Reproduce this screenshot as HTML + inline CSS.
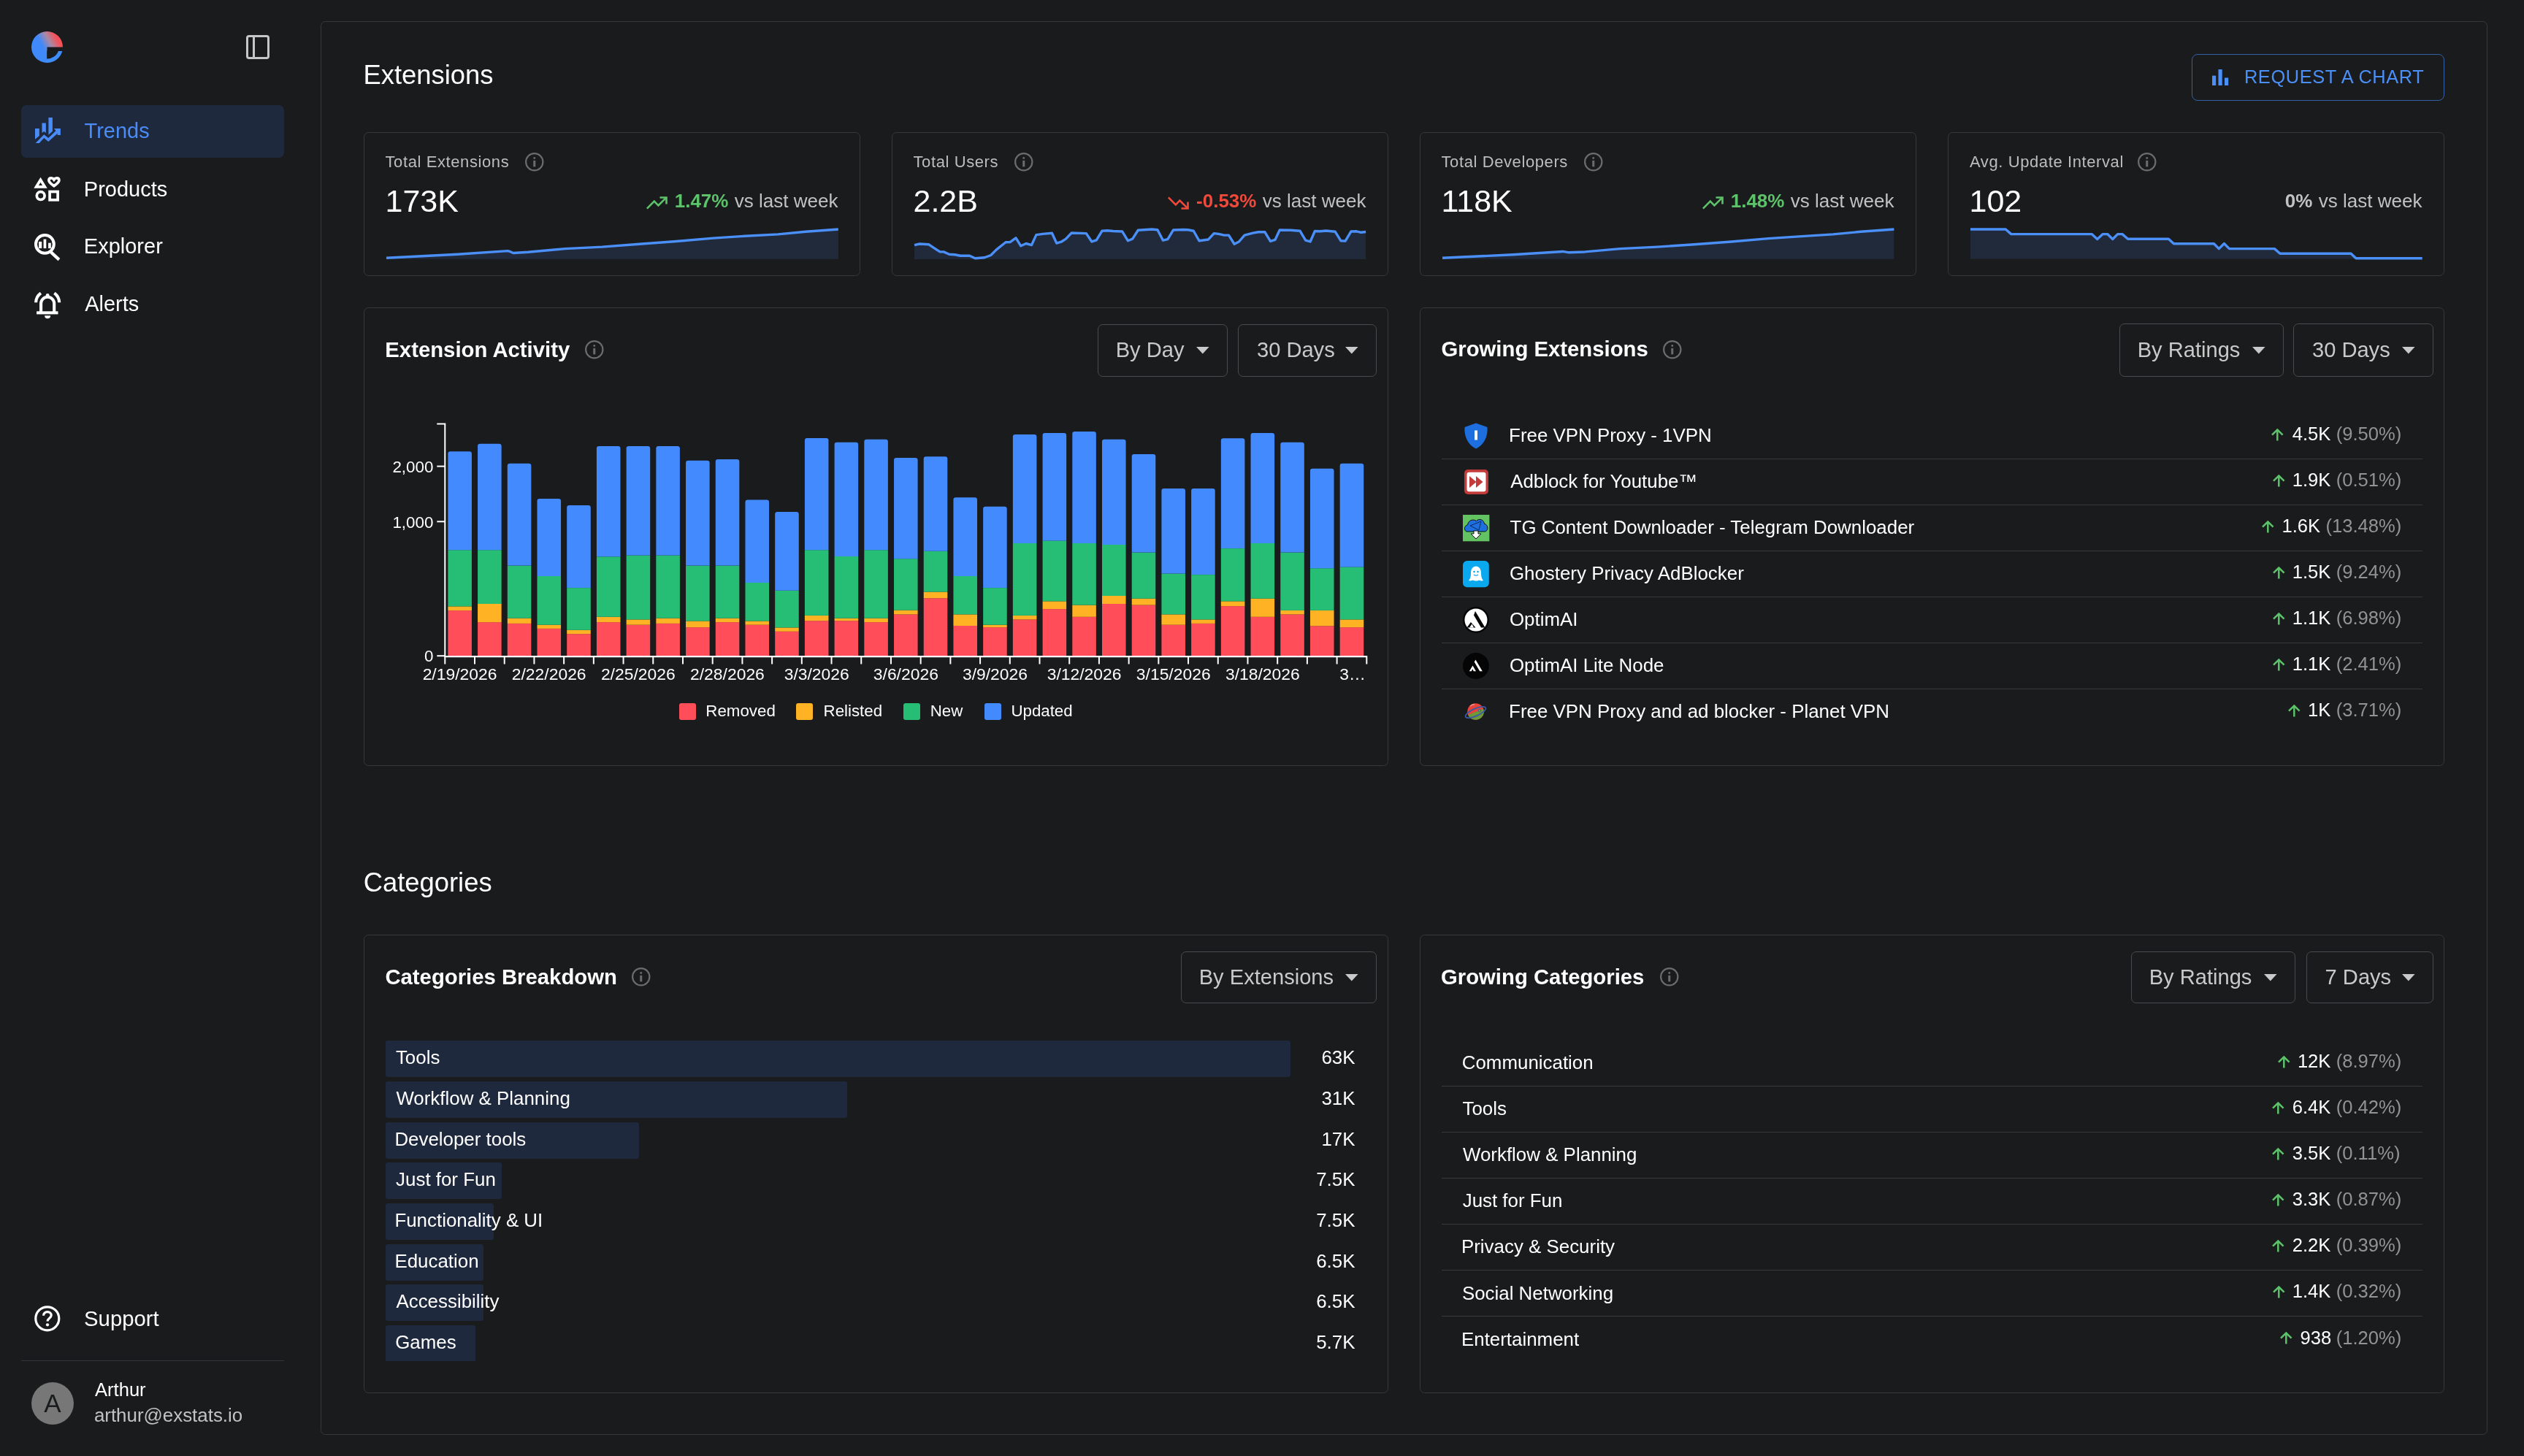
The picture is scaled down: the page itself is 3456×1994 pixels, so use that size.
<!DOCTYPE html><html><head><meta charset="utf-8"><style>
html,body{margin:0;padding:0;background:#1a1b1c;width:3456px;height:1994px;overflow:hidden;}
body{position:relative;font-family:"Liberation Sans",sans-serif;}
#w{position:absolute;left:0;top:0;width:3456px;height:1994px;will-change:transform;}
.t{position:absolute;white-space:nowrap;}
.r{position:absolute;}
.s{position:absolute;overflow:visible;}
</style></head><body><div id="w">
<svg class="s" style="left:43px;top:43px;" width="43" height="43" viewBox="0 0 43 43"><defs><linearGradient id="lg" x1="0.95" y1="0.25" x2="0.3" y2="0.6"><stop offset="0.15" stop-color="#f55158"/><stop offset="0.5" stop-color="#a88aa6"/><stop offset="0.85" stop-color="#4089fb"/></linearGradient></defs>
<path d="M21.5 21.5 H43 A21.5 21.5 0 1 0 21.5 43 Z" fill="url(#lg)"/>
<path d="M20.5 26.9 H42.3 A21.5 21.5 0 0 1 21.5 43 H20.5 Z" fill="#3f8cfb"/>
<path d="M21.2 26.4 H37 A15.7 15.7 0 0 1 21.2 37.4 Z" fill="#1a1b1c"/></svg>
<div class="r" style="left:337.3px;top:48.3px;width:31.4px;height:32.3px;background:transparent;border:3.2px solid #c6c6c6;border-radius:4px;box-sizing:border-box;"></div>
<div class="r" style="left:345.6px;top:48.3px;width:3.2px;height:32.3px;background:#c6c6c6;border-radius:0;"></div>
<div class="r" style="left:29.2px;top:144px;width:359.8px;height:72px;background:#1f293d;border-radius:7px;"></div>
<svg class="s" style="left:48.2px;top:161px;" width="36" height="36" viewBox="0 0 36 36"><g fill="#4a8cf7"><path d="M0 14.9 H5.85 V24.9 L0 29.8 Z"/><path d="M9.48 7.5 H14.85 V21.1 L12.2 19 L9.48 21.1 Z"/><path d="M18.43 0 H23.91 V18.85 L18.43 23.76 Z"/>
<path d="M0.68 34.9 L12.2 23.19 L18.25 27.91 L28.63 18.09 L25.8 15.07 H34.87 V23.95 H30.71 V21.87 L18.25 33.02 L12.2 28.1 L5.78 34.9 Z"/></g></svg>
<div class="t" style="left:115.55px;top:164.75px;font-size:29px;line-height:29px;color:#4a8cf7;font-weight:400;letter-spacing:0px;">Trends</div>
<svg class="s" style="left:47.2px;top:242.3px;" width="36" height="35" viewBox="0 0 36 35"><g fill="none" stroke="#ffffff" stroke-width="3.7"><path d="M8.5 4.2 L14.4 13.9 H2.6 Z" stroke-linejoin="miter"/>
<path d="M26.9 12.6 C24 10.3 19.9 7.8 19.9 4.9 C19.9 2.8 21.4 1.9 23.1 1.9 C24.6 1.9 26 2.8 26.9 4.1 C27.8 2.8 29.2 1.9 30.7 1.9 C32.4 1.9 33.9 2.8 33.9 4.9 C33.9 7.8 29.8 10.3 26.9 12.6 Z"/>
<circle cx="8.7" cy="26.1" r="5.4"/><rect x="21.1" y="20.5" width="11" height="11.3"/></g></svg>
<div class="t" style="left:114.82px;top:244.55px;font-size:29px;line-height:29px;color:#fff;font-weight:400;letter-spacing:0px;">Products</div>
<svg class="s" style="left:46.9px;top:320px;" width="36" height="36" viewBox="0 0 36 36"><circle cx="14.4" cy="14.4" r="12.4" fill="none" stroke="#ffffff" stroke-width="4"/>
<g fill="#ffffff"><rect x="6.1" y="10.9" width="4.1" height="9.2"/><rect x="12.6" y="7.6" width="3.7" height="12.5"/><rect x="19.1" y="12.7" width="3.7" height="7.4"/></g>
<line x1="22.6" y1="25.1" x2="33.9" y2="35.6" stroke="#ffffff" stroke-width="4.2"/></svg>
<div class="t" style="left:114.82px;top:323.15px;font-size:29px;line-height:29px;color:#fff;font-weight:400;letter-spacing:0px;">Explorer</div>
<svg class="s" style="left:46.9px;top:399.7px;" width="36" height="37" viewBox="0 0 36 37"><g fill="none" stroke="#ffffff" stroke-width="4.1"><path d="M9.1 27 V15.8 A9.05 9.05 0 0 1 27.2 15.8 V27"/>
<path d="M8.9 1.3 A16.8 16.8 0 0 0 2.1 14.2"/><path d="M27.4 1.3 A16.8 16.8 0 0 1 34.2 14.2"/></g>
<rect x="3.1" y="26.3" width="29.4" height="4.1" fill="#ffffff"/><circle cx="18.15" cy="4.3" r="2.4" fill="#ffffff"/><path d="M14.1 32.3 H22.2 A4.05 4.05 0 0 1 14.1 32.3 Z" fill="#ffffff"/></svg>
<div class="t" style="left:116.14px;top:402.35px;font-size:29px;line-height:29px;color:#fff;font-weight:400;letter-spacing:0px;">Alerts</div>
<svg class="s" style="left:46.8px;top:1787.5px;" width="36" height="36" viewBox="0 0 36 36"><circle cx="17.8" cy="17.8" r="16" fill="none" stroke="#ffffff" stroke-width="3.2"/>
<path d="M12.6 13.7 C12.6 10.6 15 8.6 17.9 8.6 C20.9 8.6 23.2 10.6 23.2 13.3 C23.2 17.3 18.1 17.3 18.1 21.6" fill="none" stroke="#ffffff" stroke-width="3.2"/>
<circle cx="18" cy="26.3" r="2.1" fill="#ffffff"/></svg>
<div class="t" style="left:115.07px;top:1790.99px;font-size:29.3px;line-height:29.3px;color:#fff;font-weight:400;letter-spacing:0px;">Support</div>
<div class="r" style="left:29px;top:1862.8px;width:360px;height:1.5px;background:#333437;border-radius:0;"></div>
<div class="r" style="left:43px;top:1893px;width:58px;height:58px;border-radius:50%;background:#777778"></div>
<div class="t" style="left:60.33px;top:1904.47px;font-size:35px;line-height:35px;color:#1a1b1c;font-weight:400;letter-spacing:0px;">A</div>
<div class="t" style="left:129.95px;top:1890.62px;font-size:25.6px;line-height:25.6px;color:#fff;font-weight:400;letter-spacing:0px;">Arthur</div>
<div class="t" style="left:128.9px;top:1925.97px;font-size:25.9px;line-height:25.9px;color:#c2c2c2;font-weight:400;letter-spacing:0px;">arthur@exstats.io</div>
<div class="r" style="left:439px;top:29px;width:2967px;height:1936px;background:transparent;border:1px solid #37383a;border-radius:6.5px;box-sizing:border-box;"></div>
<div class="t" style="left:497.51px;top:85.38px;font-size:36.4px;line-height:36.4px;color:#fff;font-weight:400;letter-spacing:0px;">Extensions</div>
<div class="r" style="left:3001.3px;top:74.4px;width:345.4px;height:63.3px;background:transparent;border:1.5px solid #3560a8;border-radius:8px;box-sizing:border-box;"></div>
<svg class="s" style="left:3028.8px;top:95px;" width="22.4" height="22" viewBox="0 0 22.4 22"><g fill="#4b8ff9"><rect x="0" y="8.6" width="5.2" height="13.4"/><rect x="8.5" y="0" width="5.2" height="22"/><rect x="17" y="11.5" width="5.2" height="10.5"/></g></svg>
<div class="t" style="left:3072.92px;top:92.99px;font-size:25.4px;line-height:25.4px;color:#4b8ff9;font-weight:400;letter-spacing:0.6px;">REQUEST A CHART</div>
<div class="r" style="left:498px;top:181px;width:680px;height:197px;background:transparent;border:1px solid #37383a;border-radius:6.5px;box-sizing:border-box;"></div>
<div class="t" style="left:527.51px;top:211.07px;font-size:22px;line-height:22px;color:#bdbdbd;font-weight:400;letter-spacing:0.6px;">Total Extensions</div>
<svg class="s" style="left:719.1px;top:209.05px;" width="25.5" height="25.5" viewBox="0 0 25.5 25.5"><circle cx="12.75" cy="12.75" r="11.65" fill="none" stroke="#6b6c6e" stroke-width="2.2"/><rect x="11.25" y="10.85" width="3" height="8.5" fill="#6b6c6e"/><circle cx="12.75" cy="7.45" r="1.45" fill="#6b6c6e"/></svg>
<div class="t" style="left:527.5px;top:253.79px;font-size:43px;line-height:43px;color:#fff;font-weight:400;letter-spacing:0px;">173K</div>
<div class="t" style="left:1005.86px;top:261.59px;font-size:26px;line-height:26px;color:#c2c2c2;font-weight:400;letter-spacing:0px;">vs last week</div>
<div class="t" style="left:923.71px;top:261.59px;font-size:26px;line-height:26px;color:#5dc36b;font-weight:700;letter-spacing:0px;">1.47%</div>
<svg class="s" style="left:885.15px;top:268.5px;" width="29" height="18" viewBox="0 0 29 18"><g fill="none" stroke="#5dc36b" stroke-width="2.6"><polyline points="0.9,16.6 10.8,6.7 16.4,12.3 27,1.8"/><polyline points="18.5,1.5 27.5,1.5 27.5,10.5"/></g></svg>
<div class="r" style="left:1221px;top:181px;width:680px;height:197px;background:transparent;border:1px solid #37383a;border-radius:6.5px;box-sizing:border-box;"></div>
<div class="t" style="left:1250.51px;top:211.07px;font-size:22px;line-height:22px;color:#bdbdbd;font-weight:400;letter-spacing:0.6px;">Total Users</div>
<svg class="s" style="left:1388.93px;top:209.05px;" width="25.5" height="25.5" viewBox="0 0 25.5 25.5"><circle cx="12.75" cy="12.75" r="11.65" fill="none" stroke="#6b6c6e" stroke-width="2.2"/><rect x="11.25" y="10.85" width="3" height="8.5" fill="#6b6c6e"/><circle cx="12.75" cy="7.45" r="1.45" fill="#6b6c6e"/></svg>
<div class="t" style="left:1250.5px;top:253.79px;font-size:43px;line-height:43px;color:#fff;font-weight:400;letter-spacing:0px;">2.2B</div>
<div class="t" style="left:1728.86px;top:261.59px;font-size:26px;line-height:26px;color:#c2c2c2;font-weight:400;letter-spacing:0px;">vs last week</div>
<div class="t" style="left:1638.05px;top:261.59px;font-size:26px;line-height:26px;color:#ef4a3c;font-weight:700;letter-spacing:0px;">-0.53%</div>
<svg class="s" style="left:1598.87px;top:269px;" width="29" height="18" viewBox="0 0 29 18"><g transform="translate(0,18) scale(1,-1)" fill="none" stroke="#ef4a3c" stroke-width="2.6"><polyline points="0.9,16.6 10.8,6.7 16.4,12.3 27,1.8"/><polyline points="18.5,1.5 27.5,1.5 27.5,10.5"/></g></svg>
<div class="r" style="left:1944px;top:181px;width:680px;height:197px;background:transparent;border:1px solid #37383a;border-radius:6.5px;box-sizing:border-box;"></div>
<div class="t" style="left:1973.51px;top:211.07px;font-size:22px;line-height:22px;color:#bdbdbd;font-weight:400;letter-spacing:0.6px;">Total Developers</div>
<svg class="s" style="left:2168.76px;top:209.05px;" width="25.5" height="25.5" viewBox="0 0 25.5 25.5"><circle cx="12.75" cy="12.75" r="11.65" fill="none" stroke="#6b6c6e" stroke-width="2.2"/><rect x="11.25" y="10.85" width="3" height="8.5" fill="#6b6c6e"/><circle cx="12.75" cy="7.45" r="1.45" fill="#6b6c6e"/></svg>
<div class="t" style="left:1973.5px;top:253.79px;font-size:43px;line-height:43px;color:#fff;font-weight:400;letter-spacing:0px;">118K</div>
<div class="t" style="left:2451.86px;top:261.59px;font-size:26px;line-height:26px;color:#c2c2c2;font-weight:400;letter-spacing:0px;">vs last week</div>
<div class="t" style="left:2369.71px;top:261.59px;font-size:26px;line-height:26px;color:#5dc36b;font-weight:700;letter-spacing:0px;">1.48%</div>
<svg class="s" style="left:2331.15px;top:268.5px;" width="29" height="18" viewBox="0 0 29 18"><g fill="none" stroke="#5dc36b" stroke-width="2.6"><polyline points="0.9,16.6 10.8,6.7 16.4,12.3 27,1.8"/><polyline points="18.5,1.5 27.5,1.5 27.5,10.5"/></g></svg>
<div class="r" style="left:2667px;top:181px;width:680px;height:197px;background:transparent;border:1px solid #37383a;border-radius:6.5px;box-sizing:border-box;"></div>
<div class="t" style="left:2696.96px;top:211.07px;font-size:22px;line-height:22px;color:#bdbdbd;font-weight:400;letter-spacing:0.6px;">Avg. Update Interval</div>
<svg class="s" style="left:2926.97px;top:209.05px;" width="25.5" height="25.5" viewBox="0 0 25.5 25.5"><circle cx="12.75" cy="12.75" r="11.65" fill="none" stroke="#6b6c6e" stroke-width="2.2"/><rect x="11.25" y="10.85" width="3" height="8.5" fill="#6b6c6e"/><circle cx="12.75" cy="7.45" r="1.45" fill="#6b6c6e"/></svg>
<div class="t" style="left:2696.5px;top:253.79px;font-size:43px;line-height:43px;color:#fff;font-weight:400;letter-spacing:0px;">102</div>
<div class="t" style="left:3174.86px;top:261.59px;font-size:26px;line-height:26px;color:#c2c2c2;font-weight:400;letter-spacing:0px;">vs last week</div>
<div class="t" style="left:3128.85px;top:261.59px;font-size:26px;line-height:26px;color:#c2c2c2;font-weight:700;letter-spacing:0px;">0%</div>
<svg class="s" style="left:526.8px;top:310.95px;" width="622.8" height="44.75" viewBox="0 0 622.8 44.75"><path d="M2,43.75 L2,42.3 L99.69,37.23 L168.15,32.67 L171.95,33.68 L175.76,35.45 L196.04,34.19 L246.75,29.62 L297.46,27.09 L348.17,23.28 L398.88,19.48 L449.59,15.17 L487.62,12.63 L538.33,9.85 L576.36,6.3 L620.8,3 L620.8,43.75 Z" fill="#212a3b"/><polyline points="2,42.3 99.69,37.23 168.15,32.67 171.95,33.68 175.76,35.45 196.04,34.19 246.75,29.62 297.46,27.09 348.17,23.28 398.88,19.48 449.59,15.17 487.62,12.63 538.33,9.85 576.36,6.3 620.8,3" fill="none" stroke="#4b8ff9" stroke-width="3.4" stroke-linejoin="round"/></svg>
<svg class="s" style="left:1249.9px;top:310.58px;" width="622.2" height="45.12" viewBox="0 0 622.2 45.12"><path d="M2,44.12 L2,24.55 L9.12,23.03 L21.79,23.79 L28.13,28.1 L37.01,33.93 L42.08,33.93 L49.68,37.23 L57.29,37.74 L64.9,39.26 L77.57,39.26 L85.18,42.81 L97.86,41.79 L106.73,38.5 L114.34,30.89 L127.02,20.75 L133.36,20.49 L140.96,14.92 L147.81,25.82 L154.91,22.52 L162.51,24.55 L168.85,10.61 L177.73,9.34 L190.4,8.32 L196.74,22.02 L203.08,20.24 L209.42,16.18 L217.03,8.07 L237.31,8.58 L244.92,19.99 L251.26,17.96 L258.86,5.28 L266.47,4.77 L274.08,5.54 L286.75,6.04 L294.36,18.72 L300.7,16.18 L308.3,4.27 L319.71,3.51 L327.32,3 L334.93,3.76 L342.53,18.21 L348.87,16.69 L356.48,4.01 L370.42,3.51 L376.76,3.76 L384.37,5.28 L391.98,18.72 L404.65,16.95 L412.26,8.58 L418.6,9.34 L426.21,11.11 L432.54,11.11 L440.15,23.28 L446.49,19.99 L454.1,11.11 L465.51,8.07 L473.11,6.8 L481.99,6.8 L489.59,19.48 L495.93,17.45 L502.27,4.01 L517.48,4.27 L530.16,5.28 L537.77,18.21 L544.11,19.99 L550.44,5.54 L558.05,5.79 L565.66,5.03 L578.34,6.3 L585.94,18.72 L592.28,18.97 L599.89,6.04 L607.49,5.79 L613.83,7.31 L620.2,6.55 L620.2,44.12 Z" fill="#212a3b"/><polyline points="2,24.55 9.12,23.03 21.79,23.79 28.13,28.1 37.01,33.93 42.08,33.93 49.68,37.23 57.29,37.74 64.9,39.26 77.57,39.26 85.18,42.81 97.86,41.79 106.73,38.5 114.34,30.89 127.02,20.75 133.36,20.49 140.96,14.92 147.81,25.82 154.91,22.52 162.51,24.55 168.85,10.61 177.73,9.34 190.4,8.32 196.74,22.02 203.08,20.24 209.42,16.18 217.03,8.07 237.31,8.58 244.92,19.99 251.26,17.96 258.86,5.28 266.47,4.77 274.08,5.54 286.75,6.04 294.36,18.72 300.7,16.18 308.3,4.27 319.71,3.51 327.32,3 334.93,3.76 342.53,18.21 348.87,16.69 356.48,4.01 370.42,3.51 376.76,3.76 384.37,5.28 391.98,18.72 404.65,16.95 412.26,8.58 418.6,9.34 426.21,11.11 432.54,11.11 440.15,23.28 446.49,19.99 454.1,11.11 465.51,8.07 473.11,6.8 481.99,6.8 489.59,19.48 495.93,17.45 502.27,4.01 517.48,4.27 530.16,5.28 537.77,18.21 544.11,19.99 550.44,5.54 558.05,5.79 565.66,5.03 578.34,6.3 585.94,18.72 592.28,18.97 599.89,6.04 607.49,5.79 613.83,7.31 620.2,6.55" fill="none" stroke="#4b8ff9" stroke-width="3.4" stroke-linejoin="round"/></svg>
<svg class="s" style="left:1973.2px;top:310.95px;" width="622.4" height="44.75" viewBox="0 0 622.4 44.75"><path d="M2,43.75 L2,42.3 L98.29,37.74 L166.75,33.43 L174.36,34.69 L197.18,33.93 L245.35,29.62 L296.06,27.09 L346.77,23.79 L397.48,19.99 L448.19,15.68 L486.22,13.14 L536.93,9.85 L574.96,6.3 L620.4,3 L620.4,43.75 Z" fill="#212a3b"/><polyline points="2,42.3 98.29,37.74 166.75,33.43 174.36,34.69 197.18,33.93 245.35,29.62 296.06,27.09 346.77,23.79 397.48,19.99 448.19,15.68 486.22,13.14 536.93,9.85 574.96,6.3 620.4,3" fill="none" stroke="#4b8ff9" stroke-width="3.4" stroke-linejoin="round"/></svg>
<svg class="s" style="left:2695.7px;top:311.09px;" width="622.7" height="44.61" viewBox="0 0 622.7 44.61"><path d="M2,43.61 L2,3 L50.22,3 L57.83,9.59 L168.12,9.59 L175.73,16.44 L183.34,9.59 L189.68,9.59 L196.77,16.44 L203.62,9.59 L209.96,9.59 L217.57,16.18 L273.35,16.18 L280.45,22.78 L335.47,22.78 L342.31,29.62 L349.41,22.52 L356.51,29.62 L418.38,29.62 L425.98,36.22 L523.09,36.22 L529.94,42.81 L620.7,42.81 L620.7,43.61 Z" fill="#212a3b"/><polyline points="2,3 50.22,3 57.83,9.59 168.12,9.59 175.73,16.44 183.34,9.59 189.68,9.59 196.77,16.44 203.62,9.59 209.96,9.59 217.57,16.18 273.35,16.18 280.45,22.78 335.47,22.78 342.31,29.62 349.41,22.52 356.51,29.62 418.38,29.62 425.98,36.22 523.09,36.22 529.94,42.81 620.7,42.81" fill="none" stroke="#4b8ff9" stroke-width="3.4" stroke-linejoin="round"/></svg>
<div class="r" style="left:498px;top:421px;width:1403px;height:628px;background:transparent;border:1px solid #37383a;border-radius:6.5px;box-sizing:border-box;"></div>
<div class="t" style="left:527.34px;top:463.69px;font-size:29.3px;line-height:29.3px;color:#fff;font-weight:700;letter-spacing:0px;">Extension Activity</div>
<svg class="s" style="left:801.25px;top:466.25px;" width="25.5" height="25.5" viewBox="0 0 25.5 25.5"><circle cx="12.75" cy="12.75" r="11.65" fill="none" stroke="#6b6c6e" stroke-width="2.2"/><rect x="11.25" y="10.85" width="3" height="8.5" fill="#6b6c6e"/><circle cx="12.75" cy="7.45" r="1.45" fill="#6b6c6e"/></svg>
<div class="r" style="left:1503px;top:444px;width:178px;height:72px;background:transparent;border:1.5px solid #4a4b4e;border-radius:7px;box-sizing:border-box;"></div>
<div class="t" style="left:1527.71px;top:465.16px;font-size:29.1px;line-height:29.1px;color:#c9c9c9;font-weight:400;letter-spacing:0px;">By Day</div>
<svg class="s" style="left:1638.4px;top:475.2px;" width="17.6" height="9.6" viewBox="0 0 17.6 9.6"><path d="M0 0H17.6L8.8 9.6Z" fill="#c9c9c9"/></svg>
<div class="r" style="left:1695px;top:444px;width:190px;height:72px;background:transparent;border:1.5px solid #4a4b4e;border-radius:7px;box-sizing:border-box;"></div>
<div class="t" style="left:1720.99px;top:465.16px;font-size:29.1px;line-height:29.1px;color:#c9c9c9;font-weight:400;letter-spacing:0px;">30 Days</div>
<svg class="s" style="left:1842.4px;top:475.2px;" width="17.6" height="9.6" viewBox="0 0 17.6 9.6"><path d="M0 0H17.6L8.8 9.6Z" fill="#c9c9c9"/></svg>
<svg class="s" style="left:0px;top:0px;" width="1960" height="1000" viewBox="0 0 1960 1000"><rect x="613.37" y="836.1" width="32.57" height="62.1" fill="#ff4d5a"/><rect x="613.37" y="830.4" width="32.57" height="5.7" fill="#ffb224"/><rect x="613.37" y="753.2" width="32.57" height="77.2" fill="#25be74"/><path d="M613.37,753.2 V621.5 Q613.37,618.3 616.57,618.3 H642.74 Q645.94,618.3 645.94,621.5 V753.2 Z" fill="#438aff"/><rect x="654.08" y="852.1" width="32.57" height="46.1" fill="#ff4d5a"/><rect x="654.08" y="827" width="32.57" height="25.1" fill="#ffb224"/><rect x="654.08" y="753.2" width="32.57" height="73.8" fill="#25be74"/><path d="M654.08,753.2 V611 Q654.08,607.8 657.28,607.8 H683.45 Q686.65,607.8 686.65,611 V753.2 Z" fill="#438aff"/><rect x="694.79" y="853.9" width="32.57" height="44.3" fill="#ff4d5a"/><rect x="694.79" y="846.6" width="32.57" height="7.3" fill="#ffb224"/><rect x="694.79" y="774.6" width="32.57" height="72" fill="#25be74"/><path d="M694.79,774.6 V637.9 Q694.79,634.7 697.99,634.7 H724.16 Q727.36,634.7 727.36,637.9 V774.6 Z" fill="#438aff"/><rect x="735.5" y="860.9" width="32.57" height="37.3" fill="#ff4d5a"/><rect x="735.5" y="855.7" width="32.57" height="5.2" fill="#ffb224"/><rect x="735.5" y="788.9" width="32.57" height="66.8" fill="#25be74"/><path d="M735.5,788.9 V686.2 Q735.5,683 738.7,683 H764.87 Q768.07,683 768.07,686.2 V788.9 Z" fill="#438aff"/><rect x="776.21" y="868.2" width="32.57" height="30" fill="#ff4d5a"/><rect x="776.21" y="862.8" width="32.57" height="5.4" fill="#ffb224"/><rect x="776.21" y="805.1" width="32.57" height="57.7" fill="#25be74"/><path d="M776.21,805.1 V695.1 Q776.21,691.9 779.41,691.9 H805.58 Q808.78,691.9 808.78,695.1 V805.1 Z" fill="#438aff"/><rect x="816.92" y="852.1" width="32.57" height="46.1" fill="#ff4d5a"/><rect x="816.92" y="844.8" width="32.57" height="7.3" fill="#ffb224"/><rect x="816.92" y="762.3" width="32.57" height="82.5" fill="#25be74"/><path d="M816.92,762.3 V614.2 Q816.92,611 820.12,611 H846.29 Q849.49,611 849.49,614.2 V762.3 Z" fill="#438aff"/><rect x="857.63" y="855.7" width="32.57" height="42.5" fill="#ff4d5a"/><rect x="857.63" y="848.4" width="32.57" height="7.3" fill="#ffb224"/><rect x="857.63" y="760.5" width="32.57" height="87.9" fill="#25be74"/><path d="M857.63,760.5 V614.2 Q857.63,611 860.83,611 H887 Q890.2,611 890.2,614.2 V760.5 Z" fill="#438aff"/><rect x="898.34" y="853.9" width="32.57" height="44.3" fill="#ff4d5a"/><rect x="898.34" y="846.6" width="32.57" height="7.3" fill="#ffb224"/><rect x="898.34" y="760.5" width="32.57" height="86.1" fill="#25be74"/><path d="M898.34,760.5 V614.2 Q898.34,611 901.54,611 H927.71 Q930.91,611 930.91,614.2 V760.5 Z" fill="#438aff"/><rect x="939.05" y="859.1" width="32.57" height="39.1" fill="#ff4d5a"/><rect x="939.05" y="850.5" width="32.57" height="8.6" fill="#ffb224"/><rect x="939.05" y="774.6" width="32.57" height="75.9" fill="#25be74"/><path d="M939.05,774.6 V634 Q939.05,630.8 942.25,630.8 H968.42 Q971.62,630.8 971.62,634 V774.6 Z" fill="#438aff"/><rect x="979.76" y="852.1" width="32.57" height="46.1" fill="#ff4d5a"/><rect x="979.76" y="846.6" width="32.57" height="5.5" fill="#ffb224"/><rect x="979.76" y="774.6" width="32.57" height="72" fill="#25be74"/><path d="M979.76,774.6 V632.2 Q979.76,629 982.96,629 H1009.13 Q1012.33,629 1012.33,632.2 V774.6 Z" fill="#438aff"/><rect x="1020.47" y="855.7" width="32.57" height="42.5" fill="#ff4d5a"/><rect x="1020.47" y="850.5" width="32.57" height="5.2" fill="#ffb224"/><rect x="1020.47" y="798" width="32.57" height="52.5" fill="#25be74"/><path d="M1020.47,798 V687.7 Q1020.47,684.5 1023.67,684.5 H1049.84 Q1053.04,684.5 1053.04,687.7 V798 Z" fill="#438aff"/><rect x="1061.18" y="864.8" width="32.57" height="33.4" fill="#ff4d5a"/><rect x="1061.18" y="859.4" width="32.57" height="5.4" fill="#ffb224"/><rect x="1061.18" y="808.7" width="32.57" height="50.7" fill="#25be74"/><path d="M1061.18,808.7 V704.2 Q1061.18,701 1064.38,701 H1090.55 Q1093.75,701 1093.75,704.2 V808.7 Z" fill="#438aff"/><rect x="1101.89" y="850.2" width="32.57" height="48" fill="#ff4d5a"/><rect x="1101.89" y="842.9" width="32.57" height="7.3" fill="#ffb224"/><rect x="1101.89" y="753.2" width="32.57" height="89.7" fill="#25be74"/><path d="M1101.89,753.2 V603.2 Q1101.89,600 1105.09,600 H1131.26 Q1134.46,600 1134.46,603.2 V753.2 Z" fill="#438aff"/><rect x="1142.6" y="850.2" width="32.57" height="48" fill="#ff4d5a"/><rect x="1142.6" y="846.6" width="32.57" height="3.6" fill="#ffb224"/><rect x="1142.6" y="762" width="32.57" height="84.6" fill="#25be74"/><path d="M1142.6,762 V608.9 Q1142.6,605.7 1145.8,605.7 H1171.97 Q1175.17,605.7 1175.17,608.9 V762 Z" fill="#438aff"/><rect x="1183.31" y="852.1" width="32.57" height="46.1" fill="#ff4d5a"/><rect x="1183.31" y="846.6" width="32.57" height="5.5" fill="#ffb224"/><rect x="1183.31" y="753.2" width="32.57" height="93.4" fill="#25be74"/><path d="M1183.31,753.2 V605 Q1183.31,601.8 1186.51,601.8 H1212.68 Q1215.88,601.8 1215.88,605 V753.2 Z" fill="#438aff"/><rect x="1224.02" y="841.4" width="32.57" height="56.8" fill="#ff4d5a"/><rect x="1224.02" y="835.6" width="32.57" height="5.8" fill="#ffb224"/><rect x="1224.02" y="765.2" width="32.57" height="70.4" fill="#25be74"/><path d="M1224.02,765.2 V630.3 Q1224.02,627.1 1227.22,627.1 H1253.39 Q1256.59,627.1 1256.59,630.3 V765.2 Z" fill="#438aff"/><rect x="1264.73" y="819.2" width="32.57" height="79" fill="#ff4d5a"/><rect x="1264.73" y="810.6" width="32.57" height="8.6" fill="#ffb224"/><rect x="1264.73" y="754.7" width="32.57" height="55.9" fill="#25be74"/><path d="M1264.73,754.7 V628.5 Q1264.73,625.3 1267.93,625.3 H1294.1 Q1297.3,625.3 1297.3,628.5 V754.7 Z" fill="#438aff"/><rect x="1305.44" y="857" width="32.57" height="41.2" fill="#ff4d5a"/><rect x="1305.44" y="841.4" width="32.57" height="15.6" fill="#ffb224"/><rect x="1305.44" y="788.9" width="32.57" height="52.5" fill="#25be74"/><path d="M1305.44,788.9 V684.4 Q1305.44,681.2 1308.64,681.2 H1334.81 Q1338.01,681.2 1338.01,684.4 V788.9 Z" fill="#438aff"/><rect x="1346.15" y="859.1" width="32.57" height="39.1" fill="#ff4d5a"/><rect x="1346.15" y="855.7" width="32.57" height="3.4" fill="#ffb224"/><rect x="1346.15" y="805.1" width="32.57" height="50.6" fill="#25be74"/><path d="M1346.15,805.1 V696.9 Q1346.15,693.7 1349.35,693.7 H1375.52 Q1378.72,693.7 1378.72,696.9 V805.1 Z" fill="#438aff"/><rect x="1386.86" y="848.4" width="32.57" height="49.8" fill="#ff4d5a"/><rect x="1386.86" y="842.9" width="32.57" height="5.5" fill="#ffb224"/><rect x="1386.86" y="744" width="32.57" height="98.9" fill="#25be74"/><path d="M1386.86,744 V598.2 Q1386.86,595 1390.06,595 H1416.23 Q1419.43,595 1419.43,598.2 V744 Z" fill="#438aff"/><rect x="1427.57" y="834.1" width="32.57" height="64.1" fill="#ff4d5a"/><rect x="1427.57" y="823.4" width="32.57" height="10.7" fill="#ffb224"/><rect x="1427.57" y="740.4" width="32.57" height="83" fill="#25be74"/><path d="M1427.57,740.4 V596.2 Q1427.57,593 1430.77,593 H1456.94 Q1460.14,593 1460.14,596.2 V740.4 Z" fill="#438aff"/><rect x="1468.28" y="844.8" width="32.57" height="53.4" fill="#ff4d5a"/><rect x="1468.28" y="828.6" width="32.57" height="16.2" fill="#ffb224"/><rect x="1468.28" y="744" width="32.57" height="84.6" fill="#25be74"/><path d="M1468.28,744 V594.3 Q1468.28,591.1 1471.48,591.1 H1497.65 Q1500.85,591.1 1500.85,594.3 V744 Z" fill="#438aff"/><rect x="1508.99" y="827" width="32.57" height="71.2" fill="#ff4d5a"/><rect x="1508.99" y="816" width="32.57" height="11" fill="#ffb224"/><rect x="1508.99" y="745.9" width="32.57" height="70.1" fill="#25be74"/><path d="M1508.99,745.9 V605 Q1508.99,601.8 1512.19,601.8 H1538.36 Q1541.56,601.8 1541.56,605 V745.9 Z" fill="#438aff"/><rect x="1549.7" y="828.6" width="32.57" height="69.6" fill="#ff4d5a"/><rect x="1549.7" y="819.7" width="32.57" height="8.9" fill="#ffb224"/><rect x="1549.7" y="756.6" width="32.57" height="63.1" fill="#25be74"/><path d="M1549.7,756.6 V625.1 Q1549.7,621.9 1552.9,621.9 H1579.07 Q1582.27,621.9 1582.27,625.1 V756.6 Z" fill="#438aff"/><rect x="1590.41" y="855.7" width="32.57" height="42.5" fill="#ff4d5a"/><rect x="1590.41" y="841.4" width="32.57" height="14.3" fill="#ffb224"/><rect x="1590.41" y="785.5" width="32.57" height="55.9" fill="#25be74"/><path d="M1590.41,785.5 V672.1 Q1590.41,668.9 1593.61,668.9 H1619.78 Q1622.98,668.9 1622.98,672.1 V785.5 Z" fill="#438aff"/><rect x="1631.12" y="853.9" width="32.57" height="44.3" fill="#ff4d5a"/><rect x="1631.12" y="848.4" width="32.57" height="5.5" fill="#ffb224"/><rect x="1631.12" y="787.1" width="32.57" height="61.3" fill="#25be74"/><path d="M1631.12,787.1 V672.1 Q1631.12,668.9 1634.32,668.9 H1660.49 Q1663.69,668.9 1663.69,672.1 V787.1 Z" fill="#438aff"/><rect x="1671.83" y="830.1" width="32.57" height="68.1" fill="#ff4d5a"/><rect x="1671.83" y="823.4" width="32.57" height="6.7" fill="#ffb224"/><rect x="1671.83" y="751.1" width="32.57" height="72.3" fill="#25be74"/><path d="M1671.83,751.1 V603.5 Q1671.83,600.3 1675.03,600.3 H1701.2 Q1704.4,600.3 1704.4,603.5 V751.1 Z" fill="#438aff"/><rect x="1712.54" y="844.8" width="32.57" height="53.4" fill="#ff4d5a"/><rect x="1712.54" y="819.7" width="32.57" height="25.1" fill="#ffb224"/><rect x="1712.54" y="744" width="32.57" height="75.7" fill="#25be74"/><path d="M1712.54,744 V596.2 Q1712.54,593 1715.74,593 H1741.91 Q1745.11,593 1745.11,596.2 V744 Z" fill="#438aff"/><rect x="1753.25" y="841.4" width="32.57" height="56.8" fill="#ff4d5a"/><rect x="1753.25" y="835.9" width="32.57" height="5.5" fill="#ffb224"/><rect x="1753.25" y="756.6" width="32.57" height="79.3" fill="#25be74"/><path d="M1753.25,756.6 V608.9 Q1753.25,605.7 1756.45,605.7 H1782.62 Q1785.82,605.7 1785.82,608.9 V756.6 Z" fill="#438aff"/><rect x="1793.96" y="857.3" width="32.57" height="40.9" fill="#ff4d5a"/><rect x="1793.96" y="835.9" width="32.57" height="21.4" fill="#ffb224"/><rect x="1793.96" y="778.2" width="32.57" height="57.7" fill="#25be74"/><path d="M1793.96,778.2 V645 Q1793.96,641.8 1797.16,641.8 H1823.33 Q1826.53,641.8 1826.53,645 V778.2 Z" fill="#438aff"/><rect x="1834.67" y="859.1" width="32.57" height="39.1" fill="#ff4d5a"/><rect x="1834.67" y="848.4" width="32.57" height="10.7" fill="#ffb224"/><rect x="1834.67" y="776.4" width="32.57" height="72" fill="#25be74"/><path d="M1834.67,776.4 V637.9 Q1834.67,634.7 1837.87,634.7 H1864.04 Q1867.24,634.7 1867.24,637.9 V776.4 Z" fill="#438aff"/><path d="M598.3,580.5 H609.3 V898.2" fill="none" stroke="#ffffff" stroke-width="2"/><line x1="608.3" y1="899.1" x2="1871.5" y2="899.1" stroke="#ffffff" stroke-width="2.2"/><line x1="598.3" y1="898.2" x2="609.3" y2="898.2" stroke="#ffffff" stroke-width="2"/><line x1="598.3" y1="714.3" x2="609.3" y2="714.3" stroke="#ffffff" stroke-width="2"/><line x1="598.3" y1="638.6" x2="609.3" y2="638.6" stroke="#ffffff" stroke-width="2"/><line x1="609.3" y1="898.2" x2="609.3" y2="909.5" stroke="#ffffff" stroke-width="2"/><line x1="650.01" y1="898.2" x2="650.01" y2="909.5" stroke="#ffffff" stroke-width="2"/><line x1="690.72" y1="898.2" x2="690.72" y2="909.5" stroke="#ffffff" stroke-width="2"/><line x1="731.43" y1="898.2" x2="731.43" y2="909.5" stroke="#ffffff" stroke-width="2"/><line x1="772.14" y1="898.2" x2="772.14" y2="909.5" stroke="#ffffff" stroke-width="2"/><line x1="812.85" y1="898.2" x2="812.85" y2="909.5" stroke="#ffffff" stroke-width="2"/><line x1="853.56" y1="898.2" x2="853.56" y2="909.5" stroke="#ffffff" stroke-width="2"/><line x1="894.27" y1="898.2" x2="894.27" y2="909.5" stroke="#ffffff" stroke-width="2"/><line x1="934.98" y1="898.2" x2="934.98" y2="909.5" stroke="#ffffff" stroke-width="2"/><line x1="975.69" y1="898.2" x2="975.69" y2="909.5" stroke="#ffffff" stroke-width="2"/><line x1="1016.4" y1="898.2" x2="1016.4" y2="909.5" stroke="#ffffff" stroke-width="2"/><line x1="1057.11" y1="898.2" x2="1057.11" y2="909.5" stroke="#ffffff" stroke-width="2"/><line x1="1097.82" y1="898.2" x2="1097.82" y2="909.5" stroke="#ffffff" stroke-width="2"/><line x1="1138.53" y1="898.2" x2="1138.53" y2="909.5" stroke="#ffffff" stroke-width="2"/><line x1="1179.24" y1="898.2" x2="1179.24" y2="909.5" stroke="#ffffff" stroke-width="2"/><line x1="1219.95" y1="898.2" x2="1219.95" y2="909.5" stroke="#ffffff" stroke-width="2"/><line x1="1260.66" y1="898.2" x2="1260.66" y2="909.5" stroke="#ffffff" stroke-width="2"/><line x1="1301.37" y1="898.2" x2="1301.37" y2="909.5" stroke="#ffffff" stroke-width="2"/><line x1="1342.08" y1="898.2" x2="1342.08" y2="909.5" stroke="#ffffff" stroke-width="2"/><line x1="1382.79" y1="898.2" x2="1382.79" y2="909.5" stroke="#ffffff" stroke-width="2"/><line x1="1423.5" y1="898.2" x2="1423.5" y2="909.5" stroke="#ffffff" stroke-width="2"/><line x1="1464.21" y1="898.2" x2="1464.21" y2="909.5" stroke="#ffffff" stroke-width="2"/><line x1="1504.92" y1="898.2" x2="1504.92" y2="909.5" stroke="#ffffff" stroke-width="2"/><line x1="1545.63" y1="898.2" x2="1545.63" y2="909.5" stroke="#ffffff" stroke-width="2"/><line x1="1586.34" y1="898.2" x2="1586.34" y2="909.5" stroke="#ffffff" stroke-width="2"/><line x1="1627.05" y1="898.2" x2="1627.05" y2="909.5" stroke="#ffffff" stroke-width="2"/><line x1="1667.76" y1="898.2" x2="1667.76" y2="909.5" stroke="#ffffff" stroke-width="2"/><line x1="1708.47" y1="898.2" x2="1708.47" y2="909.5" stroke="#ffffff" stroke-width="2"/><line x1="1749.18" y1="898.2" x2="1749.18" y2="909.5" stroke="#ffffff" stroke-width="2"/><line x1="1789.89" y1="898.2" x2="1789.89" y2="909.5" stroke="#ffffff" stroke-width="2"/><line x1="1830.6" y1="898.2" x2="1830.6" y2="909.5" stroke="#ffffff" stroke-width="2"/><line x1="1871.31" y1="898.2" x2="1871.31" y2="909.5" stroke="#ffffff" stroke-width="2"/></svg>
<div class="t" style="left:581.02px;top:888.43px;font-size:22.4px;line-height:22.4px;color:#fff;font-weight:400;letter-spacing:0px;">0</div>
<div class="t" style="left:537.42px;top:704.53px;font-size:22.4px;line-height:22.4px;color:#fff;font-weight:400;letter-spacing:0px;">1,000</div>
<div class="t" style="left:537.42px;top:628.83px;font-size:22.4px;line-height:22.4px;color:#fff;font-weight:400;letter-spacing:0px;">2,000</div>
<div class="t" style="left:578.64px;top:912.41px;font-size:22.9px;line-height:22.9px;color:#fff;font-weight:400;letter-spacing:0px;">2/19/2026</div>
<div class="t" style="left:700.77px;top:912.41px;font-size:22.9px;line-height:22.9px;color:#fff;font-weight:400;letter-spacing:0px;">2/22/2026</div>
<div class="t" style="left:822.9px;top:912.41px;font-size:22.9px;line-height:22.9px;color:#fff;font-weight:400;letter-spacing:0px;">2/25/2026</div>
<div class="t" style="left:945.03px;top:912.41px;font-size:22.9px;line-height:22.9px;color:#fff;font-weight:400;letter-spacing:0px;">2/28/2026</div>
<div class="t" style="left:1073.67px;top:912.41px;font-size:22.9px;line-height:22.9px;color:#fff;font-weight:400;letter-spacing:0px;">3/3/2026</div>
<div class="t" style="left:1195.8px;top:912.41px;font-size:22.9px;line-height:22.9px;color:#fff;font-weight:400;letter-spacing:0px;">3/6/2026</div>
<div class="t" style="left:1317.93px;top:912.41px;font-size:22.9px;line-height:22.9px;color:#fff;font-weight:400;letter-spacing:0px;">3/9/2026</div>
<div class="t" style="left:1433.69px;top:912.41px;font-size:22.9px;line-height:22.9px;color:#fff;font-weight:400;letter-spacing:0px;">3/12/2026</div>
<div class="t" style="left:1555.82px;top:912.41px;font-size:22.9px;line-height:22.9px;color:#fff;font-weight:400;letter-spacing:0px;">3/15/2026</div>
<div class="t" style="left:1677.95px;top:912.41px;font-size:22.9px;line-height:22.9px;color:#fff;font-weight:400;letter-spacing:0px;">3/18/2026</div>
<div class="t" style="left:1834.26px;top:912.41px;font-size:22.9px;line-height:22.9px;color:#fff;font-weight:400;letter-spacing:0px;">3…</div>
<div class="r" style="left:930.2px;top:963.2px;width:22.6px;height:22.6px;background:#ff4d5a;border-radius:3px;"></div>
<div class="t" style="left:966.37px;top:962.82px;font-size:22.3px;line-height:22.3px;color:#fff;font-weight:400;letter-spacing:0px;">Removed</div>
<div class="r" style="left:1090.2px;top:963.2px;width:22.6px;height:22.6px;background:#ffb224;border-radius:3px;"></div>
<div class="t" style="left:1127.57px;top:962.82px;font-size:22.3px;line-height:22.3px;color:#fff;font-weight:400;letter-spacing:0px;">Relisted</div>
<div class="r" style="left:1237px;top:963.2px;width:22.6px;height:22.6px;background:#25be74;border-radius:3px;"></div>
<div class="t" style="left:1273.77px;top:962.82px;font-size:22.3px;line-height:22.3px;color:#fff;font-weight:400;letter-spacing:0px;">New</div>
<div class="r" style="left:1348px;top:963.2px;width:22.6px;height:22.6px;background:#438aff;border-radius:3px;"></div>
<div class="t" style="left:1384.38px;top:962.82px;font-size:22.3px;line-height:22.3px;color:#fff;font-weight:400;letter-spacing:0px;">Updated</div>
<div class="r" style="left:1944px;top:421px;width:1403px;height:628px;background:transparent;border:1px solid #37383a;border-radius:6.5px;box-sizing:border-box;"></div>
<div class="t" style="left:1973.5px;top:463.49px;font-size:29.3px;line-height:29.3px;color:#fff;font-weight:700;letter-spacing:0px;">Growing Extensions</div>
<svg class="s" style="left:2277.25px;top:465.75px;" width="25.5" height="25.5" viewBox="0 0 25.5 25.5"><circle cx="12.75" cy="12.75" r="11.65" fill="none" stroke="#6b6c6e" stroke-width="2.2"/><rect x="11.25" y="10.85" width="3" height="8.5" fill="#6b6c6e"/><circle cx="12.75" cy="7.45" r="1.45" fill="#6b6c6e"/></svg>
<div class="r" style="left:2902px;top:443px;width:225px;height:73px;background:transparent;border:1.5px solid #4a4b4e;border-radius:7px;box-sizing:border-box;"></div>
<div class="t" style="left:2926.71px;top:464.66px;font-size:29.1px;line-height:29.1px;color:#c9c9c9;font-weight:400;letter-spacing:0px;">By Ratings</div>
<svg class="s" style="left:3084.4px;top:474.7px;" width="17.6" height="9.6" viewBox="0 0 17.6 9.6"><path d="M0 0H17.6L8.8 9.6Z" fill="#c9c9c9"/></svg>
<div class="r" style="left:3140px;top:443px;width:192px;height:73px;background:transparent;border:1.5px solid #4a4b4e;border-radius:7px;box-sizing:border-box;"></div>
<div class="t" style="left:3165.99px;top:464.66px;font-size:29.1px;line-height:29.1px;color:#c9c9c9;font-weight:400;letter-spacing:0px;">30 Days</div>
<svg class="s" style="left:3289.4px;top:474.7px;" width="17.6" height="9.6" viewBox="0 0 17.6 9.6"><path d="M0 0H17.6L8.8 9.6Z" fill="#c9c9c9"/></svg>
<svg class="s" style="left:2004px;top:579px;" width="34" height="36" viewBox="0 0 34 36"><path d="M17 0.5 L32.5 6 C33.5 19 28 30 17 35.5 C6 30 0.5 19 1.5 6 Z" fill="#1d6fe0"/><rect x="15" y="10.5" width="4" height="13" fill="#fff"/></svg>
<div class="t" style="left:2066.08px;top:583.67px;font-size:25.9px;line-height:25.9px;color:#fff;font-weight:400;letter-spacing:0px;">Free VPN Proxy - 1VPN</div>
<div class="t" style="left:3198.75px;top:581.62px;font-size:25.6px;line-height:25.6px;color:#939393;font-weight:400;letter-spacing:0px;">(9.50%)</div>
<div class="t" style="left:3138.76px;top:581.62px;font-size:25.6px;line-height:25.6px;color:#ffffff;font-weight:400;letter-spacing:0px;">4.5K</div>
<svg class="s" style="left:3110.25px;top:586.5px;" width="16.6" height="16.5" viewBox="0 0 16.6 16.5"><g fill="none" stroke="#5dc36b" stroke-width="2.5"><line x1="8.3" y1="1.5" x2="8.3" y2="16.5"/><polyline points="1,8.6 8.3,1.5 15.6,8.6"/></g></svg>
<div class="r" style="left:1974px;top:627.5px;width:1343px;height:1.5px;background:#393a3c;border-radius:0;"></div>
<svg class="s" style="left:2004.8px;top:642.9px;" width="33" height="34" viewBox="0 0 33 34"><rect x="0" y="0" width="33" height="34" rx="5" fill="#c33c3c"/><rect x="3.5" y="3.8" width="26" height="26.4" rx="3" fill="#fff"/><path d="M7 9 L16.5 17 L7 25 Z M16 9 L25.5 17 L16 25 Z" fill="#c33c3c"/></svg>
<div class="t" style="left:2068.15px;top:646.67px;font-size:25.9px;line-height:25.9px;color:#fff;font-weight:400;letter-spacing:0px;">Adblock for Youtube™</div>
<div class="t" style="left:3198.75px;top:644.62px;font-size:25.6px;line-height:25.6px;color:#939393;font-weight:400;letter-spacing:0px;">(0.51%)</div>
<div class="t" style="left:3138.76px;top:644.62px;font-size:25.6px;line-height:25.6px;color:#ffffff;font-weight:400;letter-spacing:0px;">1.9K</div>
<svg class="s" style="left:3111.61px;top:649.5px;" width="16.6" height="16.5" viewBox="0 0 16.6 16.5"><g fill="none" stroke="#5dc36b" stroke-width="2.5"><line x1="8.3" y1="1.5" x2="8.3" y2="16.5"/><polyline points="1,8.6 8.3,1.5 15.6,8.6"/></g></svg>
<div class="r" style="left:1974px;top:690.5px;width:1343px;height:1.5px;background:#393a3c;border-radius:0;"></div>
<svg class="s" style="left:2002.8px;top:704.7px;" width="36.4" height="36.3" viewBox="0 0 36.4 36.3"><rect width="36.4" height="36.3" fill="#63c262"/><path d="M6 23 C1.5 23 1 15 6.5 14 C7 8 14 5 18.5 8.5 C22 4.5 29 6.5 29.5 12.5 C35 13 35.5 22.5 30 23 Z" fill="#1e6fe0" stroke="#111" stroke-width="1"/><path d="M15 22 H21 V26 H25 L18 33 L11 26 H15 Z" fill="#fff" stroke="#111" stroke-width="1"/><path d="M10 15 L25 9 L22 21 Z" fill="none" stroke="#0e2a55" stroke-width="1"/></svg>
<div class="t" style="left:2067.62px;top:709.67px;font-size:25.9px;line-height:25.9px;color:#fff;font-weight:400;letter-spacing:0px;">TG Content Downloader - Telegram Downloader</div>
<div class="t" style="left:3184.51px;top:707.62px;font-size:25.6px;line-height:25.6px;color:#939393;font-weight:400;letter-spacing:0px;">(13.48%)</div>
<div class="t" style="left:3124.53px;top:707.62px;font-size:25.6px;line-height:25.6px;color:#ffffff;font-weight:400;letter-spacing:0px;">1.6K</div>
<svg class="s" style="left:3097.38px;top:712.5px;" width="16.6" height="16.5" viewBox="0 0 16.6 16.5"><g fill="none" stroke="#5dc36b" stroke-width="2.5"><line x1="8.3" y1="1.5" x2="8.3" y2="16.5"/><polyline points="1,8.6 8.3,1.5 15.6,8.6"/></g></svg>
<div class="r" style="left:1974px;top:753.5px;width:1343px;height:1.5px;background:#393a3c;border-radius:0;"></div>
<svg class="s" style="left:2003.2px;top:767.9px;" width="35.8" height="36.3" viewBox="0 0 35.8 36.3"><rect width="35.8" height="36.3" rx="6" fill="#0aa9ef"/><path d="M8 27 C10 25 11 22 11 17 C11 11 14 7.5 18 7.5 C22 7.5 25 11 25 17 C25 22 26 25 28 27 C25 28 23.5 27 22 26.5 C20.5 28 16 28 14 26.5 C12 27 10 28 8 27 Z" fill="#fff"/><circle cx="15.5" cy="15" r="1.3" fill="#0aa9ef"/><circle cx="20.5" cy="15" r="1.3" fill="#0aa9ef"/><path d="M15 19 Q18 21.5 21 19" fill="none" stroke="#0aa9ef" stroke-width="1.2"/></svg>
<div class="t" style="left:2066.9px;top:772.67px;font-size:25.9px;line-height:25.9px;color:#fff;font-weight:400;letter-spacing:0px;">Ghostery Privacy AdBlocker</div>
<div class="t" style="left:3198.75px;top:770.62px;font-size:25.6px;line-height:25.6px;color:#939393;font-weight:400;letter-spacing:0px;">(9.24%)</div>
<div class="t" style="left:3138.76px;top:770.62px;font-size:25.6px;line-height:25.6px;color:#ffffff;font-weight:400;letter-spacing:0px;">1.5K</div>
<svg class="s" style="left:3111.61px;top:775.5px;" width="16.6" height="16.5" viewBox="0 0 16.6 16.5"><g fill="none" stroke="#5dc36b" stroke-width="2.5"><line x1="8.3" y1="1.5" x2="8.3" y2="16.5"/><polyline points="1,8.6 8.3,1.5 15.6,8.6"/></g></svg>
<div class="r" style="left:1974px;top:816.5px;width:1343px;height:1.5px;background:#393a3c;border-radius:0;"></div>
<svg class="s" style="left:2003.2px;top:830.9px;" width="35.9" height="35.9" viewBox="0 0 35.9 35.9"><circle cx="17.95" cy="17.95" r="17.95" fill="#050505"/><circle cx="17.95" cy="17.95" r="15.5" fill="#fff"/><path d="M17 6 L30.5 28.5 H25 L15 11.5 Z M11 21 L17.5 28.5 H5.5 Z" fill="#050505"/><path d="M12.5 23.5 L15 28.5 H9 Z" fill="#fff"/></svg>
<div class="t" style="left:2066.97px;top:835.67px;font-size:25.9px;line-height:25.9px;color:#fff;font-weight:400;letter-spacing:0px;">OptimAI</div>
<div class="t" style="left:3198.75px;top:833.62px;font-size:25.6px;line-height:25.6px;color:#939393;font-weight:400;letter-spacing:0px;">(6.98%)</div>
<div class="t" style="left:3138.76px;top:833.62px;font-size:25.6px;line-height:25.6px;color:#ffffff;font-weight:400;letter-spacing:0px;">1.1K</div>
<svg class="s" style="left:3111.61px;top:838.5px;" width="16.6" height="16.5" viewBox="0 0 16.6 16.5"><g fill="none" stroke="#5dc36b" stroke-width="2.5"><line x1="8.3" y1="1.5" x2="8.3" y2="16.5"/><polyline points="1,8.6 8.3,1.5 15.6,8.6"/></g></svg>
<div class="r" style="left:1974px;top:879.5px;width:1343px;height:1.5px;background:#393a3c;border-radius:0;"></div>
<svg class="s" style="left:2003.2px;top:893.8px;" width="35.9" height="36" viewBox="0 0 35.9 36"><circle cx="17.95" cy="18" r="17.95" fill="#050505"/><path d="M17.5 9.5 L26.8 25.2 H23.2 L15.7 12.6 Z M13.5 17.5 L18 25.2 H14.8 L13.3 22.3 L11.8 25.2 H8.8 Z" fill="#fff"/></svg>
<div class="t" style="left:2066.97px;top:898.67px;font-size:25.9px;line-height:25.9px;color:#fff;font-weight:400;letter-spacing:0px;">OptimAI Lite Node</div>
<div class="t" style="left:3198.75px;top:896.62px;font-size:25.6px;line-height:25.6px;color:#939393;font-weight:400;letter-spacing:0px;">(2.41%)</div>
<div class="t" style="left:3138.76px;top:896.62px;font-size:25.6px;line-height:25.6px;color:#ffffff;font-weight:400;letter-spacing:0px;">1.1K</div>
<svg class="s" style="left:3111.61px;top:901.5px;" width="16.6" height="16.5" viewBox="0 0 16.6 16.5"><g fill="none" stroke="#5dc36b" stroke-width="2.5"><line x1="8.3" y1="1.5" x2="8.3" y2="16.5"/><polyline points="1,8.6 8.3,1.5 15.6,8.6"/></g></svg>
<div class="r" style="left:1974px;top:942.5px;width:1343px;height:1.5px;background:#393a3c;border-radius:0;"></div>
<svg class="s" style="left:2005.3px;top:961.4px;" width="31" height="27" viewBox="0 0 31 27"><defs><clipPath id="pc"><circle cx="15.5" cy="13.5" r="11.3"/></clipPath></defs><g clip-path="url(#pc)"><rect width="31" height="27" fill="#e8443a"/><path d="M0 20 L31 8 V27 H0 Z" fill="#6a9a3a"/></g><path d="M8 6 Q11 3.5 14 3.6" stroke="#f48a8a" stroke-width="1.6" fill="none"/><ellipse cx="15.5" cy="14.5" rx="15" ry="5" fill="none" stroke="#3a5aa8" stroke-width="1.8" transform="rotate(-24 15.5 14.5)"/><circle cx="21" cy="12" r="1.8" fill="#6a9a3a" stroke="#3a5aa8" stroke-width="0.8"/></svg>
<div class="t" style="left:2066.08px;top:961.67px;font-size:25.9px;line-height:25.9px;color:#fff;font-weight:400;letter-spacing:0px;">Free VPN Proxy and ad blocker - Planet VPN</div>
<div class="t" style="left:3198.75px;top:959.62px;font-size:25.6px;line-height:25.6px;color:#939393;font-weight:400;letter-spacing:0px;">(3.71%)</div>
<div class="t" style="left:3160.11px;top:959.62px;font-size:25.6px;line-height:25.6px;color:#ffffff;font-weight:400;letter-spacing:0px;">1K</div>
<svg class="s" style="left:3132.96px;top:964.5px;" width="16.6" height="16.5" viewBox="0 0 16.6 16.5"><g fill="none" stroke="#5dc36b" stroke-width="2.5"><line x1="8.3" y1="1.5" x2="8.3" y2="16.5"/><polyline points="1,8.6 8.3,1.5 15.6,8.6"/></g></svg>
<div class="t" style="left:497.65px;top:1190.78px;font-size:36.4px;line-height:36.4px;color:#fff;font-weight:400;letter-spacing:0px;">Categories</div>
<div class="r" style="left:498px;top:1280px;width:1403px;height:628px;background:transparent;border:1px solid #37383a;border-radius:6.5px;box-sizing:border-box;"></div>
<div class="t" style="left:527.4px;top:1322.69px;font-size:29.3px;line-height:29.3px;color:#fff;font-weight:700;letter-spacing:0px;">Categories Breakdown</div>
<svg class="s" style="left:865.45px;top:1325.15px;" width="25.5" height="25.5" viewBox="0 0 25.5 25.5"><circle cx="12.75" cy="12.75" r="11.65" fill="none" stroke="#6b6c6e" stroke-width="2.2"/><rect x="11.25" y="10.85" width="3" height="8.5" fill="#6b6c6e"/><circle cx="12.75" cy="7.45" r="1.45" fill="#6b6c6e"/></svg>
<div class="r" style="left:1617px;top:1303px;width:268px;height:71px;background:transparent;border:1.5px solid #4a4b4e;border-radius:7px;box-sizing:border-box;"></div>
<div class="t" style="left:1641.71px;top:1323.66px;font-size:29.1px;line-height:29.1px;color:#c9c9c9;font-weight:400;letter-spacing:0px;">By Extensions</div>
<svg class="s" style="left:1842.4px;top:1333.7px;" width="17.6" height="9.6" viewBox="0 0 17.6 9.6"><path d="M0 0H17.6L8.8 9.6Z" fill="#c9c9c9"/></svg>
<div class="r" style="left:528.2px;top:1425.1px;width:1239.3px;height:50.2px;background:#1f293d;border-radius:3px;"></div>
<div class="t" style="left:541.92px;top:1436.27px;font-size:25.9px;line-height:25.9px;color:#fff;font-weight:400;letter-spacing:0px;">Tools</div>
<div class="t" style="left:1809.41px;top:1436.27px;font-size:25.9px;line-height:25.9px;color:#fff;font-weight:400;letter-spacing:0px;">63K</div>
<div class="r" style="left:528.2px;top:1480.8px;width:631.4px;height:50.2px;background:#1f293d;border-radius:3px;"></div>
<div class="t" style="left:542.39px;top:1491.97px;font-size:25.9px;line-height:25.9px;color:#fff;font-weight:400;letter-spacing:0px;">Workflow &amp; Planning</div>
<div class="t" style="left:1809.41px;top:1491.97px;font-size:25.9px;line-height:25.9px;color:#fff;font-weight:400;letter-spacing:0px;">31K</div>
<div class="r" style="left:528.2px;top:1536.5px;width:346.7px;height:50.2px;background:#1f293d;border-radius:3px;"></div>
<div class="t" style="left:540.38px;top:1547.67px;font-size:25.9px;line-height:25.9px;color:#fff;font-weight:400;letter-spacing:0px;">Developer tools</div>
<div class="t" style="left:1809.41px;top:1547.67px;font-size:25.9px;line-height:25.9px;color:#fff;font-weight:400;letter-spacing:0px;">17K</div>
<div class="r" style="left:528.2px;top:1592.2px;width:159.2px;height:50.2px;background:#1f293d;border-radius:3px;"></div>
<div class="t" style="left:542.1px;top:1603.37px;font-size:25.9px;line-height:25.9px;color:#fff;font-weight:400;letter-spacing:0px;">Just for Fun</div>
<div class="t" style="left:1802.21px;top:1603.37px;font-size:25.9px;line-height:25.9px;color:#fff;font-weight:400;letter-spacing:0px;">7.5K</div>
<div class="r" style="left:528.2px;top:1647.9px;width:147.6px;height:50.2px;background:#1f293d;border-radius:3px;"></div>
<div class="t" style="left:540.38px;top:1659.07px;font-size:25.9px;line-height:25.9px;color:#fff;font-weight:400;letter-spacing:0px;">Functionality &amp; UI</div>
<div class="t" style="left:1802.21px;top:1659.07px;font-size:25.9px;line-height:25.9px;color:#fff;font-weight:400;letter-spacing:0px;">7.5K</div>
<div class="r" style="left:528.2px;top:1703.6px;width:134.1px;height:50.2px;background:#1f293d;border-radius:3px;"></div>
<div class="t" style="left:540.38px;top:1714.77px;font-size:25.9px;line-height:25.9px;color:#fff;font-weight:400;letter-spacing:0px;">Education</div>
<div class="t" style="left:1802.21px;top:1714.77px;font-size:25.9px;line-height:25.9px;color:#fff;font-weight:400;letter-spacing:0px;">6.5K</div>
<div class="r" style="left:528.2px;top:1759.3px;width:134.1px;height:50.2px;background:#1f293d;border-radius:3px;"></div>
<div class="t" style="left:542.45px;top:1770.47px;font-size:25.9px;line-height:25.9px;color:#fff;font-weight:400;letter-spacing:0px;">Accessibility</div>
<div class="t" style="left:1802.21px;top:1770.47px;font-size:25.9px;line-height:25.9px;color:#fff;font-weight:400;letter-spacing:0px;">6.5K</div>
<div class="r" style="left:528.2px;top:1815px;width:122.4px;height:48.6px;background:#1f293d;border-radius:3px 3px 0 0;"></div>
<div class="t" style="left:541.2px;top:1826.17px;font-size:25.9px;line-height:25.9px;color:#fff;font-weight:400;letter-spacing:0px;">Games</div>
<div class="t" style="left:1802.21px;top:1826.17px;font-size:25.9px;line-height:25.9px;color:#fff;font-weight:400;letter-spacing:0px;">5.7K</div>
<div class="r" style="left:1944px;top:1280px;width:1403px;height:628px;background:transparent;border:1px solid #37383a;border-radius:6.5px;box-sizing:border-box;"></div>
<div class="t" style="left:1973px;top:1323.49px;font-size:29.3px;line-height:29.3px;color:#fff;font-weight:700;letter-spacing:0px;">Growing Categories</div>
<svg class="s" style="left:2272.55px;top:1324.75px;" width="25.5" height="25.5" viewBox="0 0 25.5 25.5"><circle cx="12.75" cy="12.75" r="11.65" fill="none" stroke="#6b6c6e" stroke-width="2.2"/><rect x="11.25" y="10.85" width="3" height="8.5" fill="#6b6c6e"/><circle cx="12.75" cy="7.45" r="1.45" fill="#6b6c6e"/></svg>
<div class="r" style="left:2918px;top:1303px;width:225px;height:71px;background:transparent;border:1.5px solid #4a4b4e;border-radius:7px;box-sizing:border-box;"></div>
<div class="t" style="left:2942.71px;top:1323.66px;font-size:29.1px;line-height:29.1px;color:#c9c9c9;font-weight:400;letter-spacing:0px;">By Ratings</div>
<svg class="s" style="left:3100.4px;top:1333.7px;" width="17.6" height="9.6" viewBox="0 0 17.6 9.6"><path d="M0 0H17.6L8.8 9.6Z" fill="#c9c9c9"/></svg>
<div class="r" style="left:3158px;top:1303px;width:174px;height:71px;background:transparent;border:1.5px solid #4a4b4e;border-radius:7px;box-sizing:border-box;"></div>
<div class="t" style="left:3183.61px;top:1323.66px;font-size:29.1px;line-height:29.1px;color:#c9c9c9;font-weight:400;letter-spacing:0px;">7 Days</div>
<svg class="s" style="left:3289.4px;top:1333.7px;" width="17.6" height="9.6" viewBox="0 0 17.6 9.6"><path d="M0 0H17.6L8.8 9.6Z" fill="#c9c9c9"/></svg>
<div class="t" style="left:2001.78px;top:1443.27px;font-size:25.9px;line-height:25.9px;color:#fff;font-weight:400;letter-spacing:0px;">Communication</div>
<div class="t" style="left:3198.75px;top:1441.22px;font-size:25.6px;line-height:25.6px;color:#939393;font-weight:400;letter-spacing:0px;">(8.97%)</div>
<div class="t" style="left:3145.88px;top:1441.22px;font-size:25.6px;line-height:25.6px;color:#ffffff;font-weight:400;letter-spacing:0px;">12K</div>
<svg class="s" style="left:3118.73px;top:1446.1px;" width="16.6" height="16.5" viewBox="0 0 16.6 16.5"><g fill="none" stroke="#5dc36b" stroke-width="2.5"><line x1="8.3" y1="1.5" x2="8.3" y2="16.5"/><polyline points="1,8.6 8.3,1.5 15.6,8.6"/></g></svg>
<div class="r" style="left:1974.2px;top:1486.5px;width:1342.4px;height:1.5px;background:#393a3c;border-radius:0;"></div>
<div class="t" style="left:2002.52px;top:1506.32px;font-size:25.9px;line-height:25.9px;color:#fff;font-weight:400;letter-spacing:0px;">Tools</div>
<div class="t" style="left:3198.75px;top:1504.27px;font-size:25.6px;line-height:25.6px;color:#939393;font-weight:400;letter-spacing:0px;">(0.42%)</div>
<div class="t" style="left:3138.76px;top:1504.27px;font-size:25.6px;line-height:25.6px;color:#ffffff;font-weight:400;letter-spacing:0px;">6.4K</div>
<svg class="s" style="left:3110.96px;top:1509.15px;" width="16.6" height="16.5" viewBox="0 0 16.6 16.5"><g fill="none" stroke="#5dc36b" stroke-width="2.5"><line x1="8.3" y1="1.5" x2="8.3" y2="16.5"/><polyline points="1,8.6 8.3,1.5 15.6,8.6"/></g></svg>
<div class="r" style="left:1974.2px;top:1549.55px;width:1342.4px;height:1.5px;background:#393a3c;border-radius:0;"></div>
<div class="t" style="left:2002.99px;top:1569.37px;font-size:25.9px;line-height:25.9px;color:#fff;font-weight:400;letter-spacing:0px;">Workflow &amp; Planning</div>
<div class="t" style="left:3198.75px;top:1567.32px;font-size:25.6px;line-height:25.6px;color:#939393;font-weight:400;letter-spacing:0px;">(0.11%)</div>
<div class="t" style="left:3138.76px;top:1567.32px;font-size:25.6px;line-height:25.6px;color:#ffffff;font-weight:400;letter-spacing:0px;">3.5K</div>
<svg class="s" style="left:3110.64px;top:1572.2px;" width="16.6" height="16.5" viewBox="0 0 16.6 16.5"><g fill="none" stroke="#5dc36b" stroke-width="2.5"><line x1="8.3" y1="1.5" x2="8.3" y2="16.5"/><polyline points="1,8.6 8.3,1.5 15.6,8.6"/></g></svg>
<div class="r" style="left:1974.2px;top:1612.6px;width:1342.4px;height:1.5px;background:#393a3c;border-radius:0;"></div>
<div class="t" style="left:2002.7px;top:1632.42px;font-size:25.9px;line-height:25.9px;color:#fff;font-weight:400;letter-spacing:0px;">Just for Fun</div>
<div class="t" style="left:3198.75px;top:1630.37px;font-size:25.6px;line-height:25.6px;color:#939393;font-weight:400;letter-spacing:0px;">(0.87%)</div>
<div class="t" style="left:3138.76px;top:1630.37px;font-size:25.6px;line-height:25.6px;color:#ffffff;font-weight:400;letter-spacing:0px;">3.3K</div>
<svg class="s" style="left:3110.64px;top:1635.25px;" width="16.6" height="16.5" viewBox="0 0 16.6 16.5"><g fill="none" stroke="#5dc36b" stroke-width="2.5"><line x1="8.3" y1="1.5" x2="8.3" y2="16.5"/><polyline points="1,8.6 8.3,1.5 15.6,8.6"/></g></svg>
<div class="r" style="left:1974.2px;top:1675.65px;width:1342.4px;height:1.5px;background:#393a3c;border-radius:0;"></div>
<div class="t" style="left:2000.98px;top:1695.47px;font-size:25.9px;line-height:25.9px;color:#fff;font-weight:400;letter-spacing:0px;">Privacy &amp; Security</div>
<div class="t" style="left:3198.75px;top:1693.42px;font-size:25.6px;line-height:25.6px;color:#939393;font-weight:400;letter-spacing:0px;">(0.39%)</div>
<div class="t" style="left:3138.76px;top:1693.42px;font-size:25.6px;line-height:25.6px;color:#ffffff;font-weight:400;letter-spacing:0px;">2.2K</div>
<svg class="s" style="left:3110.95px;top:1698.3px;" width="16.6" height="16.5" viewBox="0 0 16.6 16.5"><g fill="none" stroke="#5dc36b" stroke-width="2.5"><line x1="8.3" y1="1.5" x2="8.3" y2="16.5"/><polyline points="1,8.6 8.3,1.5 15.6,8.6"/></g></svg>
<div class="r" style="left:1974.2px;top:1738.7px;width:1342.4px;height:1.5px;background:#393a3c;border-radius:0;"></div>
<div class="t" style="left:2001.92px;top:1758.52px;font-size:25.9px;line-height:25.9px;color:#fff;font-weight:400;letter-spacing:0px;">Social Networking</div>
<div class="t" style="left:3198.75px;top:1756.47px;font-size:25.6px;line-height:25.6px;color:#939393;font-weight:400;letter-spacing:0px;">(0.32%)</div>
<div class="t" style="left:3138.76px;top:1756.47px;font-size:25.6px;line-height:25.6px;color:#ffffff;font-weight:400;letter-spacing:0px;">1.4K</div>
<svg class="s" style="left:3111.61px;top:1761.35px;" width="16.6" height="16.5" viewBox="0 0 16.6 16.5"><g fill="none" stroke="#5dc36b" stroke-width="2.5"><line x1="8.3" y1="1.5" x2="8.3" y2="16.5"/><polyline points="1,8.6 8.3,1.5 15.6,8.6"/></g></svg>
<div class="r" style="left:1974.2px;top:1801.75px;width:1342.4px;height:1.5px;background:#393a3c;border-radius:0;"></div>
<div class="t" style="left:2000.98px;top:1821.57px;font-size:25.9px;line-height:25.9px;color:#fff;font-weight:400;letter-spacing:0px;">Entertainment</div>
<div class="t" style="left:3198.75px;top:1819.52px;font-size:25.6px;line-height:25.6px;color:#939393;font-weight:400;letter-spacing:0px;">(1.20%)</div>
<div class="t" style="left:3149.54px;top:1819.52px;font-size:25.6px;line-height:25.6px;color:#ffffff;font-weight:400;letter-spacing:0px;">938</div>
<svg class="s" style="left:3121.64px;top:1824.4px;" width="16.6" height="16.5" viewBox="0 0 16.6 16.5"><g fill="none" stroke="#5dc36b" stroke-width="2.5"><line x1="8.3" y1="1.5" x2="8.3" y2="16.5"/><polyline points="1,8.6 8.3,1.5 15.6,8.6"/></g></svg>
</div><script>(function(){var s=window.innerWidth/3456;if(Math.abs(s-1)>0.01){var w=document.getElementById('w');w.style.transformOrigin='0 0';w.style.transform='scale('+s+')';}})();</script></body></html>
